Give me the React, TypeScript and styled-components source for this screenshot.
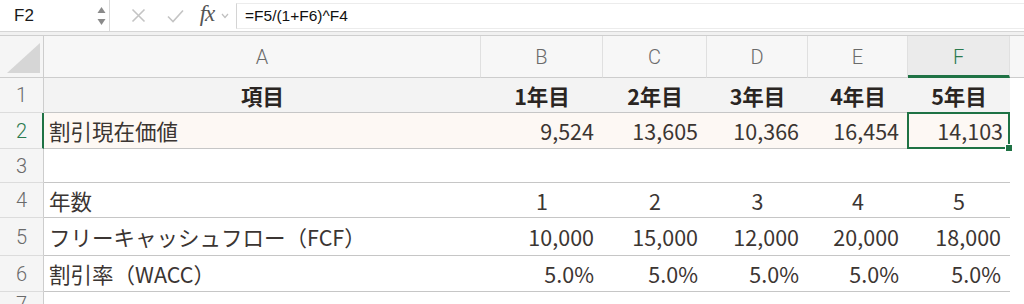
import React from "react";
import styled, { createGlobalStyle, css } from "styled-components";

const GlobalStyle = createGlobalStyle`
  html, body { margin: 0; padding: 0; background: #ffffff; overflow: hidden; }
  * { box-sizing: border-box; }
`;

const COLS = "44px 437px 122px 104px 101px 100px 102px 1fr";
const GREEN = "#1f7244";
const DATA_FONT = `"Noto Sans CJK JP", "Noto Sans", sans-serif`;
const UI_FONT = `"Liberation Sans", Roboto, sans-serif`;

const Page = styled.div`
  width: 1024px;
  height: 304px;
  overflow: hidden;
  background: #fff;
`;

const FormulaBar = styled.div`
  display: flex;
  align-items: stretch;
  height: 32px;
  border-bottom: 1px solid #d6d6d6;
  background: #fff;
`;

const NameBox = styled.div`
  width: 110px;
  display: flex;
  align-items: center;
  justify-content: space-between;
  padding: 0 3px 0 14px;
  border-right: 1px solid #d9d9d9;
  font-family: ${UI_FONT};
  font-size: 17px;
  color: #1a1a1a;
`;

const ToolIcons = styled.div`
  display: flex;
  align-items: center;
  width: 126px;
  padding-left: 10px;
`;

const IconSlot = styled.span<{ w: number }>`
  display: inline-flex;
  align-items: center;
  justify-content: center;
  width: ${(p) => p.w}px;
`;

const Fx = styled.span`
  font-family: "Liberation Serif", "DejaVu Serif", serif;
  font-style: italic;
  font-size: 23px;
  color: #555;
  letter-spacing: -1px;
  margin-top: -3px;
`;

const FormulaInput = styled.div`
  flex: 1;
  margin: 3px 0 2px;
  border-left: 1px solid #d4d4d4;
  border-top: 1px solid #ececec;
  border-bottom: 1px solid #ececec;
  display: flex;
  align-items: center;
  padding-left: 8px;
  font-family: ${UI_FONT};
  font-size: 15.5px;
  color: #111;
`;

const Gap = styled.div`
  height: 4px;
  background: #f1f1f1;
  border-bottom: 1px solid #cfcfcf;
`;

const Row = styled.div<{ h: number }>`
  display: grid;
  grid-template-columns: ${COLS};
  height: ${(p) => p.h}px;
`;

const Corner = styled.div`
  background: #f5f5f5;
  border-right: 1px solid #cdcdcd;
  border-bottom: 1px solid #cdcdcd;
  display: flex;
  align-items: flex-end;
  justify-content: flex-end;
  padding: 0 3px 4px 0;
`;

const ColHead = styled.div<{ active?: boolean; last?: boolean }>`
  background: ${(p) => (p.active ? "#ebebeb" : "#f7f7f7")};
  border-right: ${(p) => (p.last ? "none" : "1px solid #e0e0e0")};
  border-bottom: ${(p) => (p.active ? `3px solid ${GREEN}` : "1px solid #cdcdcd")};
  display: flex;
  align-items: center;
  justify-content: center;
  padding-top: ${(p) => (p.active ? "2px" : "0")};
  font-family: Roboto, "Noto Sans", sans-serif;
  font-size: 20px;
  font-weight: 300;
  color: ${(p) => (p.active ? "#2b7a4f" : "#6a6a6a")};
`;

const RowHead = styled.div<{ active?: boolean }>`
  background: #f5f5f5;
  border-right: ${(p) => (p.active ? `2px solid ${GREEN}` : "1px solid #cdcdcd")};
  border-bottom: 1px solid #dcdcdc;
  display: flex;
  align-items: center;
  justify-content: center;
  padding-left: ${(p) => (p.active ? "1px" : "0")};
  font-family: Roboto, "Noto Sans", sans-serif;
  font-size: 20px;
  font-weight: 300;
  color: ${(p) => (p.active ? "#2b7a4f" : "#6a6a6a")};
`;

type Tone = "plain" | "head" | "peach";

const toneBg: Record<Tone, string> = {
  plain: "#ffffff",
  head: "#f3f3f3",
  peach: "#fdf8f4",
};

const Cell = styled.div<{ tone: Tone; align: "left" | "center" | "right"; bold?: boolean; selected?: boolean }>`
  position: relative;
  background: ${(p) => toneBg[p.tone]};
  border-bottom: 1px solid #c6c6c6;
  display: flex;
  align-items: center;
  justify-content: ${(p) => (p.align === "left" ? "flex-start" : p.align === "right" ? "flex-end" : "center")};
  padding: ${(p) => (p.align === "left" ? "0 0 0 5px" : p.align === "right" ? "0 9px 0 0" : "0")};
  font-family: ${DATA_FONT};
  font-size: 21.5px;
  font-weight: ${(p) => (p.bold ? 700 : 400)};
  color: ${(p) => (p.bold ? "#2a2522" : "#3b3532")};
  white-space: nowrap;
  ${(p) =>
    p.selected &&
    css`
      padding-right: 7px;
      &::after {
        content: "";
        position: absolute;
        left: -1px;
        top: -1px;
        right: 0;
        bottom: -1px;
        border: 2px solid ${GREEN};
        pointer-events: none;
      }
      &::before {
        content: "";
        position: absolute;
        right: -3px;
        bottom: -4px;
        width: 6px;
        height: 6px;
        background: ${GREEN};
        border: 1px solid #fff;
        z-index: 2;
      }
    `}
`;

const Spacer = styled.div`
  background: #fff;
`;

const ColHeadSpacer = styled.div`
  background: #f7f7f7;
  border-bottom: 1px solid #cdcdcd;
`;

type Align = "left" | "center" | "right";
type RowDef = { n: number; h: number; tone: Tone; bold?: boolean; cells: { v: string; a: Align }[] };

const rows: RowDef[] = [
  {
    n: 1,
    h: 35,
    tone: "head",
    bold: true,
    cells: [
      { v: "項目", a: "center" },
      { v: "1年目", a: "center" },
      { v: "2年目", a: "center" },
      { v: "3年目", a: "center" },
      { v: "4年目", a: "center" },
      { v: "5年目", a: "center" },
    ],
  },
  {
    n: 2,
    h: 36,
    tone: "peach",
    cells: [
      { v: "割引現在価値", a: "left" },
      { v: "9,524", a: "right" },
      { v: "13,605", a: "right" },
      { v: "10,366", a: "right" },
      { v: "16,454", a: "right" },
      { v: "14,103", a: "right" },
    ],
  },
  {
    n: 3,
    h: 34,
    tone: "plain",
    cells: [
      { v: "", a: "left" },
      { v: "", a: "right" },
      { v: "", a: "right" },
      { v: "", a: "right" },
      { v: "", a: "right" },
      { v: "", a: "right" },
    ],
  },
  {
    n: 4,
    h: 35,
    tone: "plain",
    cells: [
      { v: "年数", a: "left" },
      { v: "1", a: "center" },
      { v: "2", a: "center" },
      { v: "3", a: "center" },
      { v: "4", a: "center" },
      { v: "5", a: "center" },
    ],
  },
  {
    n: 5,
    h: 38,
    tone: "plain",
    cells: [
      { v: "フリーキャッシュフロー（FCF）", a: "left" },
      { v: "10,000", a: "right" },
      { v: "15,000", a: "right" },
      { v: "12,000", a: "right" },
      { v: "20,000", a: "right" },
      { v: "18,000", a: "right" },
    ],
  },
  {
    n: 6,
    h: 36,
    tone: "plain",
    cells: [
      { v: "割引率（WACC）", a: "left" },
      { v: "5.0%", a: "right" },
      { v: "5.0%", a: "right" },
      { v: "5.0%", a: "right" },
      { v: "5.0%", a: "right" },
      { v: "5.0%", a: "right" },
    ],
  },
];

const letters = ["A", "B", "C", "D", "E", "F"];

export default function App() {
  return (
    <Page>
      <GlobalStyle />
      <FormulaBar>
        <NameBox>
          <span>F2</span>
          <svg width="9" height="22" viewBox="0 0 9 22">
            <path d="M4.5 2 L8.5 8 L0.5 8 Z" fill="#8a8a8a" />
            <path d="M4.5 20 L8.5 14 L0.5 14 Z" fill="#8a8a8a" />
          </svg>
        </NameBox>
        <ToolIcons>
          <IconSlot w={36}>
            <svg width="15" height="15" viewBox="0 0 15 15">
              <path d="M1.5 1.5 L13.5 13.5 M13.5 1.5 L1.5 13.5" stroke="#c4c4c4" strokeWidth="1.6" fill="none" />
            </svg>
          </IconSlot>
          <IconSlot w={38}>
            <svg width="17" height="14" viewBox="0 0 17 14">
              <path d="M1 7.5 L6 12.5 L16 1.5" stroke="#c4c4c4" strokeWidth="1.6" fill="none" />
            </svg>
          </IconSlot>
          <IconSlot w={26}>
            <Fx>fx</Fx>
          </IconSlot>
          <IconSlot w={10}>
            <svg width="8" height="6" viewBox="0 0 8 6">
              <path d="M1 1 L4 4.5 L7 1" stroke="#c0c0c0" strokeWidth="1.2" fill="none" />
            </svg>
          </IconSlot>
        </ToolIcons>
        <FormulaInput>=F5/(1+F6)^F4</FormulaInput>
      </FormulaBar>
      <Gap />
      <Row h={42}>
        <Corner>
          <svg width="33" height="30" viewBox="0 0 33 30">
            <path d="M33 0 L33 30 L0 30 Z" fill="#d6d6d6" />
          </svg>
        </Corner>
        {letters.map((l) => (
          <ColHead key={l} active={l === "F"}>
            {l}
          </ColHead>
        ))}
        <ColHeadSpacer />
      </Row>
      {rows.map((r) => (
        <Row key={r.n} h={r.h}>
          <RowHead active={r.n === 2}>{r.n}</RowHead>
          {r.cells.map((c, i) => (
            <Cell
              key={i}
              tone={r.tone}
              align={c.a}
              bold={r.bold}
              selected={r.n === 2 && i === 5}
            >
              {c.v}
            </Cell>
          ))}
          <Spacer />
        </Row>
      ))}
      <Row h={20}>
        <RowHead>7</RowHead>
      </Row>
    </Page>
  );
}
